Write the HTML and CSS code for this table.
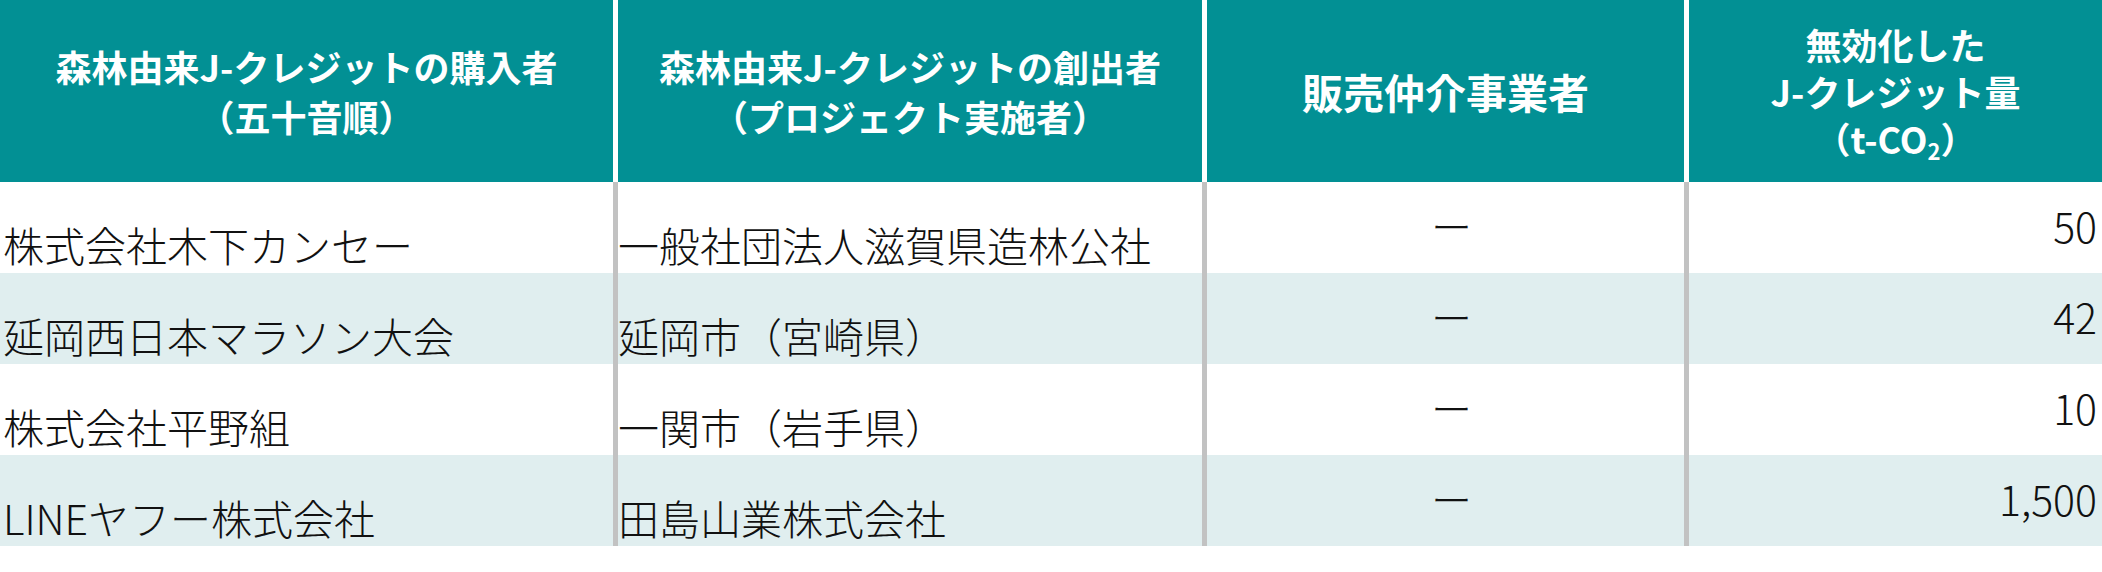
FILE: index.html
```html
<!DOCTYPE html>
<html lang="ja">
<head>
<meta charset="utf-8">
<title>森林由来J-クレジット</title>
<link rel="stylesheet" href="styles.css">
</head>
<body>
<div class="table">
  <div class="row head">
    <div class="cell"><span class="label">森林由来J-クレジットの購入者<br>（五十音順）</span></div>
    <div class="cell"><span class="label">森林由来J-クレジットの創出者<br>（プロジェクト実施者）</span></div>
    <div class="cell big"><span class="label">販売仲介事業者</span></div>
    <div class="cell tight"><span class="label">無効化した<br>J-クレジット量<br>（t-CO<sub>2</sub>）</span></div>
  </div>
  <div class="row">
    <div class="cell name">株式会社木下カンセー</div>
    <div class="cell name">一般社団法人滋賀県造林公社</div>
    <div class="cell dash">ー</div>
    <div class="cell num">50</div>
  </div>
  <div class="row alt">
    <div class="cell name">延岡西日本マラソン大会</div>
    <div class="cell name">延岡市（宮崎県）</div>
    <div class="cell dash">ー</div>
    <div class="cell num">42</div>
  </div>
  <div class="row">
    <div class="cell name">株式会社平野組</div>
    <div class="cell name">一関市（岩手県）</div>
    <div class="cell dash">ー</div>
    <div class="cell num">10</div>
  </div>
  <div class="row alt">
    <div class="cell name">LINEヤフー株式会社</div>
    <div class="cell name">田島山業株式会社</div>
    <div class="cell dash">ー</div>
    <div class="cell num">1,500</div>
  </div>
</div>
</body>
</html>
```

FILE: styles.css
```css
html, body {
  margin: 0;
  padding: 0;
  background: #ffffff;
}

body {
  width: 2102px;
  height: 572px;
  overflow: hidden;
  font-family: "Noto Sans CJK JP", "Noto Sans", sans-serif;
  color: #111111;
}

.table {
  display: flex;
  flex-direction: column;
}

.row {
  display: grid;
  grid-template-columns: 613px 589px 482px 1fr;
  height: 91px;
  background: #ffffff;
}

.row.alt {
  background: #e0eeef;
}

.row .cell + .cell {
  border-left: 5px solid #c2c2c2;
}

.row.head {
  height: 182px;
}

.row.head .cell {
  background: #029094;
  color: #ffffff;
  font-weight: 700;
  font-size: 36px;
  line-height: 50px;
  display: flex;
  align-items: center;
  justify-content: center;
  text-align: center;
}

.row.head .cell + .cell {
  border-left-color: #ffffff;
}

.row.head .cell.big {
  font-size: 41px;
}

.row.head .cell.tight {
  line-height: 47px;
}

.row.head sub {
  font-size: 22px;
  line-height: 0;
  vertical-align: -6px;
}

.cell {
  box-sizing: border-box;
  font-size: 41px;
  font-weight: 300;
  line-height: 48px;
  white-space: nowrap;
}

.cell.name {
  padding-top: 38px;
  padding-left: 3px;
}

.row .cell.name + .cell.name {
  padding-left: 0;
}

.cell.dash {
  padding-top: 19px;
  text-align: center;
  padding-left: 12px;
}

.cell.num {
  padding-top: 19px;
  padding-right: 5px;
  text-align: right;
}
```
